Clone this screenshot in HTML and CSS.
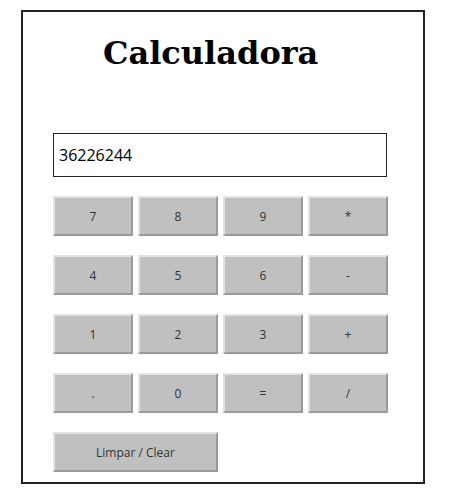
FILE: index.html
```html
<!DOCTYPE html>
<html lang="pt">
<head>
<meta charset="utf-8">
<title>Calculadora</title>
<link rel="stylesheet" href="styles.css">
</head>
<body>
<div class="calc">
  <h1 class="title">Calculadora</h1>
  <input class="display" type="text" value="36226244">
  <div class="keys">
    <button class="key">7</button>
    <button class="key">8</button>
    <button class="key">9</button>
    <button class="key">*</button>
    <button class="key">4</button>
    <button class="key">5</button>
    <button class="key">6</button>
    <button class="key">-</button>
    <button class="key">1</button>
    <button class="key">2</button>
    <button class="key">3</button>
    <button class="key">+</button>
    <button class="key">.</button>
    <button class="key">0</button>
    <button class="key">=</button>
    <button class="key">/</button>
    <button class="key key-wide">Limpar / Clear</button>
  </div>
</div>
</body>
</html>
```
FILE: styles.css
```css
html, body {
  margin: 0;
  padding: 0;
  background: #ffffff;
}

.calc {
  box-sizing: border-box;
  width: 404px;
  height: 474px;
  margin: 10px 0 0 21px;
  border: 2px solid #222222;
  padding: 23px 0 0 30px;
}

.title {
  margin: 0 0 61px 50px;
  font-family: "DejaVu Serif", serif;
  font-weight: bold;
  font-size: 32px;
  line-height: 37px;
  color: #000000;
}

.display {
  display: block;
  box-sizing: border-box;
  width: 334px;
  height: 44px;
  margin: 0;
  padding: 0 5px;
  border: 1px solid #222222;
  font-family: "Open Sans", sans-serif;
  font-size: 16px;
  color: #000000;
  background: #ffffff;
  outline: none;
}

.keys {
  display: grid;
  grid-template-columns: repeat(4, 80px);
  grid-auto-rows: 40px;
  column-gap: 5px;
  row-gap: 19px;
  margin-top: 19px;
}

.key {
  box-sizing: border-box;
  margin: 0;
  padding: 0;
  background: #c0c0c0;
  border-style: solid;
  border-width: 2px;
  border-color: #e3e3e3 #9a9a9a #9a9a9a #e3e3e3;
  font-family: "Open Sans", sans-serif;
  font-size: 12px;
  color: #333333;
  cursor: pointer;
}

.key-wide {
  grid-column: span 2;
}
```
